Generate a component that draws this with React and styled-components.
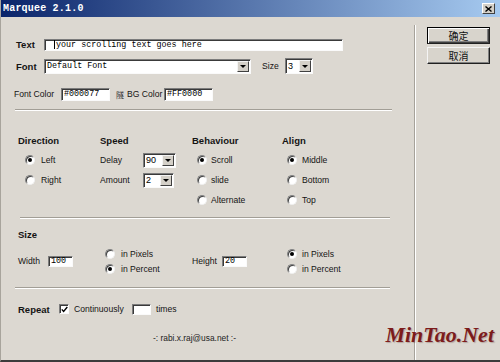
import React from "react";
import styled, { createGlobalStyle } from "styled-components";

const GlobalStyle = createGlobalStyle`
  html, body {
    margin: 0;
    padding: 0;
    background: #dcd8d1;
  }
  body {
    font-family: "Liberation Sans", Arial, sans-serif;
  }
`;

const Window = styled.div`
  width: 500px;
  height: 362px;
  box-sizing: border-box;
  display: flex;
  flex-direction: column;
  background: #dcd8d1;
  border-left: 1px solid #a8a49c;
  border-bottom: 2px solid #3c3c3c;
  position: relative;
  overflow: hidden;
  color: #141414;
  font-size: 8.6px;
`;

const TitleBar = styled.div`
  height: 17px;
  flex: none;
  display: flex;
  align-items: center;
  justify-content: space-between;
  padding: 0 5px 0 2px;
  background: linear-gradient(to right, #0a246a 0%, #a6caf0 100%);

  h1 {
    margin: 0;
    font-family: "Liberation Mono", monospace;
    font-size: 10px;
    font-weight: 700;
    color: #fff;
    letter-spacing: 0.2px;
  }
`;

const CloseButton = styled.div`
  width: 13px;
  height: 11px;
  box-sizing: border-box;
  background: #d4d0c8;
  border: 1px solid;
  border-color: #fff #404040 #404040 #fff;
  display: flex;
  align-items: center;
  justify-content: center;
`;

const Body = styled.div`
  flex: 1;
  display: flex;
  padding-top: 8px;
`;

const Main = styled.div`
  width: 414px;
  box-sizing: border-box;
  border-right: 1px solid #a6a29a;
  display: flex;
  flex-direction: column;
`;

const Side = styled.div`
  flex: 1;
  border-left: 1px solid #fff;
  padding: 2px 0 0 11px;
  display: flex;
  flex-direction: column;
  gap: 3px;
`;

const DialogButton = styled.div`
  width: 63px;
  height: 17px;
  box-sizing: border-box;
  display: flex;
  align-items: center;
  justify-content: center;
  font-family: "Noto Sans CJK SC", sans-serif;
  font-size: 10px;
  color: #111;
  background: #d8d4cc;
  border: 1px solid ${(p) => (p.$default ? "#000" : "#f4f4f4")};
  border-right-color: #202020;
  border-bottom-color: #202020;
  box-shadow: ${(p) =>
    p.$default
      ? "inset 1px 1px 0 #fff, inset -1px -1px 0 #404040, inset -2px -2px 0 #808080"
      : "inset -1px -1px 0 #808080"};
`;

const Row = styled.div`
  display: flex;
  align-items: center;
  height: ${(p) => p.$h}px;
  margin-top: ${(p) => p.$mt || 0}px;
  padding-left: ${(p) => (p.$pl === undefined ? 15 : p.$pl)}px;
`;

const Label = styled.span`
  flex: none;
  width: ${(p) => (p.$w ? `${p.$w}px` : "auto")};
  margin-left: ${(p) => p.$ml || 0}px;
  font-size: ${(p) => (p.$bold ? "9.5px" : "8.6px")};
  font-weight: ${(p) => (p.$bold ? 700 : 400)};
  white-space: nowrap;
`;

const Sunken = styled.div`
  flex: none;
  width: ${(p) => p.$w}px;
  height: ${(p) => p.$h}px;
  margin-left: ${(p) => p.$ml || 0}px;
  margin-right: ${(p) => p.$mr || 0}px;
  box-sizing: border-box;
  background: #fff;
  border: 1px solid;
  border-color: #7c7c7c #fafafa #fafafa #7c7c7c;
  box-shadow: inset 1px 1px 0 #3a3a3a;
`;

const TextBox = styled(Sunken)`
  display: flex;
  align-items: center;
  padding-left: ${(p) => p.$pad || 2}px;
  font-family: "Liberation Mono", monospace;
  font-size: 8.4px;
  color: #000;
  overflow: hidden;
  white-space: nowrap;
`;

const Caret = styled.span`
  width: 1px;
  height: 9px;
  background: #000;
  margin-right: 1px;
`;

const SelectBox = styled(Sunken)`
  display: flex;
  align-items: stretch;
  padding: 1px 1px 1px 2px;
`;

const SelectValue = styled.span`
  flex: 1;
  display: flex;
  align-items: center;
  font-family: ${(p) => (p.$mono ? '"Liberation Mono", monospace' : '"Liberation Sans", Arial, sans-serif')};
  font-size: ${(p) => (p.$mono ? "8.4px" : "9px")};
  color: #000;
`;

const ArrowButton = styled.span`
  flex: none;
  width: 12px;
  box-sizing: border-box;
  background: #d4d0c8;
  border: 1px solid;
  border-color: #f4f4f4 #404040 #404040 #f4f4f4;
  display: flex;
  align-items: center;
  justify-content: center;

  &::after {
    content: "";
    border-left: 3px solid transparent;
    border-right: 3px solid transparent;
    border-top: 3px solid #000;
  }
`;

const Separator = styled.div`
  height: 0;
  width: ${(p) => p.$w}px;
  margin-left: ${(p) => p.$ml}px;
  margin-top: ${(p) => p.$mt}px;
  border-top: 1px solid #a29e96;
  border-bottom: 1px solid #fff;
`;

const OptionsGrid = styled.div`
  display: flex;
  margin-top: 24px;
  padding-left: 17px;
`;

const Column = styled.div`
  width: ${(p) => (p.$w ? `${p.$w}px` : "auto")};
  display: flex;
  flex-direction: column;
`;

const Heading = styled.div`
  height: 12px;
  line-height: 12px;
  margin-bottom: ${(p) => (p.$mb === undefined ? 3 : p.$mb)}px;
  font-size: 9.5px;
  font-weight: 700;
`;

const Item = styled.div`
  height: ${(p) => p.$h || 20}px;
  display: flex;
  align-items: center;
  padding-left: ${(p) => p.$pl || 0}px;
`;

const RadioCircle = styled.span`
  flex: none;
  position: relative;
  width: 10px;
  height: 10px;
  box-sizing: border-box;
  border-radius: 50%;
  background: #fff;
  border: 1px solid;
  border-color: #808080 #f0f0f0 #f0f0f0 #808080;
  box-shadow: inset 1px 1px 0 #404040;
  margin-right: ${(p) => p.$gap || 5}px;

  &::after {
    content: "";
    display: ${(p) => (p.$checked ? "block" : "none")};
    position: absolute;
    left: 2px;
    top: 2px;
    width: 4px;
    height: 4px;
    border-radius: 50%;
    background: #000;
  }
`;

const RadioStack = styled.div`
  display: flex;
  flex-direction: column;
  width: ${(p) => (p.$w ? `${p.$w}px` : "auto")};
  margin-left: ${(p) => p.$ml || 0}px;
`;

const CheckBox = styled(Sunken)`
  display: flex;
  align-items: center;
  justify-content: center;
`;

const SizeBlock = styled.div`
  display: flex;
  flex-direction: column;
  margin-top: 10px;
  padding-left: 17px;
`;

const Footer = styled.div`
  margin-top: 16px;
  height: 12px;
  display: flex;
  align-items: center;
  justify-content: center;
  padding-right: 26px;
  font-size: 8.4px;
  color: #222;
`;

const Watermark = styled.div`
  position: absolute;
  right: 6px;
  top: 324px;
  font-family: "Liberation Serif", "Times New Roman", serif;
  font-style: italic;
  font-weight: 700;
  font-size: 22px;
  line-height: 22px;
  color: #7c1b1b;
  text-shadow: 1px 1px 1px rgba(60, 20, 10, 0.25);
`;

const Glyph = styled.span`
  font-family: "Noto Sans CJK SC", sans-serif;
  font-size: 8px;
  margin-left: 6px;
  color: #333;
`;

const Radio = ({ checked, label, gap, h, pl }) => (
  <Item $h={h} $pl={pl}>
    <RadioCircle $checked={checked} $gap={gap} />
    <Label>{label}</Label>
  </Item>
);

const Select = ({ w, h, value, mono, ml }) => (
  <SelectBox $w={w} $h={h} $ml={ml}>
    <SelectValue $mono={mono}>{value}</SelectValue>
    <ArrowButton />
  </SelectBox>
);

export default function App() {
  return (
    <>
      <GlobalStyle />
      <Window>
        <TitleBar>
          <h1>Marquee 2.1.0</h1>
          <CloseButton>
            <svg width="7" height="6" viewBox="0 0 7 6">
              <path d="M0.5 0.5 L6.5 5.5 M6.5 0.5 L0.5 5.5" stroke="#000" strokeWidth="1.4" />
            </svg>
          </CloseButton>
        </TitleBar>

        <Body>
          <Main>
            <Row $h={13} $mt={13}>
              <Label $bold $w={28}>Text</Label>
              <TextBox $w={299} $h={12} $pad={9}>
                <Caret />
                your scrolling text goes here
              </TextBox>
            </Row>
            <Row $h={16} $mt={7}>
              <Label $bold $w={28}>Font</Label>
              <Select w={207} h={15} value="Default Font" mono />
              <Label $ml={11} $w={23}>Size</Label>
              <Select w={28} h={16} value="3" />
            </Row>
            <Row $h={14} $mt={13} $pl={13}>
              <Label $w={47}>Font Color</Label>
              <TextBox $w={49} $h={13}>#000077</TextBox>
              <Glyph>隧</Glyph>
              <Label $ml={3} $w={37}>BG Color</Label>
              <TextBox $w={49} $h={13}>#FF0000</TextBox>
            </Row>

            <Separator $mt={8} $ml={14} $w={377} />

            <OptionsGrid>
              <Column $w={82}>
                <Heading>Direction</Heading>
                <Radio checked label="Left" pl={7} gap={6} />
                <Radio label="Right" pl={7} gap={6} />
              </Column>
              <Column $w={92}>
                <Heading>Speed</Heading>
                <Item>
                  <Label $w={43}>Delay</Label>
                  <Select w={33} h={15} value="90" />
                </Item>
                <Item>
                  <Label $w={43}>Amount</Label>
                  <Select w={31} h={15} value="2" />
                </Item>
              </Column>
              <Column $w={90}>
                <Heading>Behaviour</Heading>
                <Radio checked label="Scroll" pl={5} gap={4} />
                <Radio label="slide" pl={5} gap={4} />
                <Radio label="Alternate" pl={5} gap={4} />
              </Column>
              <Column>
                <Heading>Align</Heading>
                <Radio checked label="Middle" pl={5} />
                <Radio label="Bottom" pl={5} />
                <Radio label="Top" pl={5} />
              </Column>
            </OptionsGrid>

            <Separator $mt={7} $ml={19} $w={370} />

            <SizeBlock>
              <Heading $mb={5}>Size</Heading>
              <Row $h={30} $pl={0}>
                <Label $w={30}>Width</Label>
                <TextBox $w={25} $h={11}>100</TextBox>
                <RadioStack $ml={32} $w={87}>
                  <Radio h={15} label="in Pixels" gap={6} />
                  <Radio h={15} checked label="in Percent" gap={6} />
                </RadioStack>
                <Label $w={30}>Height</Label>
                <TextBox $w={25} $h={11}>20</TextBox>
                <RadioStack $ml={40}>
                  <Radio h={15} checked label="in Pixels" />
                  <Radio h={15} label="in Percent" />
                </RadioStack>
              </Row>
            </SizeBlock>

            <Separator $mt={11} $ml={14} $w={375} />

            <Row $h={14} $mt={13} $pl={17}>
              <Label $bold $w={41}>Repeat</Label>
              <CheckBox $w={10} $h={10} $mr={5}>
                <svg width="7" height="7" viewBox="0 0 7 7">
                  <path d="M0.8 3.4 L2.6 5.4 L6.3 1" fill="none" stroke="#000" strokeWidth="1.4" />
                </svg>
              </CheckBox>
              <Label $w={58}>Continuously</Label>
              <TextBox $w={19} $h={11} $mr={5} />
              <Label>times</Label>
            </Row>

            <Footer>-: rabi.x.raj@usa.net :-</Footer>
          </Main>

          <Side>
            <DialogButton $default>确定</DialogButton>
            <DialogButton>取消</DialogButton>
          </Side>
        </Body>

        <Watermark>MinTao.Net</Watermark>
      </Window>
    </>
  );
}
